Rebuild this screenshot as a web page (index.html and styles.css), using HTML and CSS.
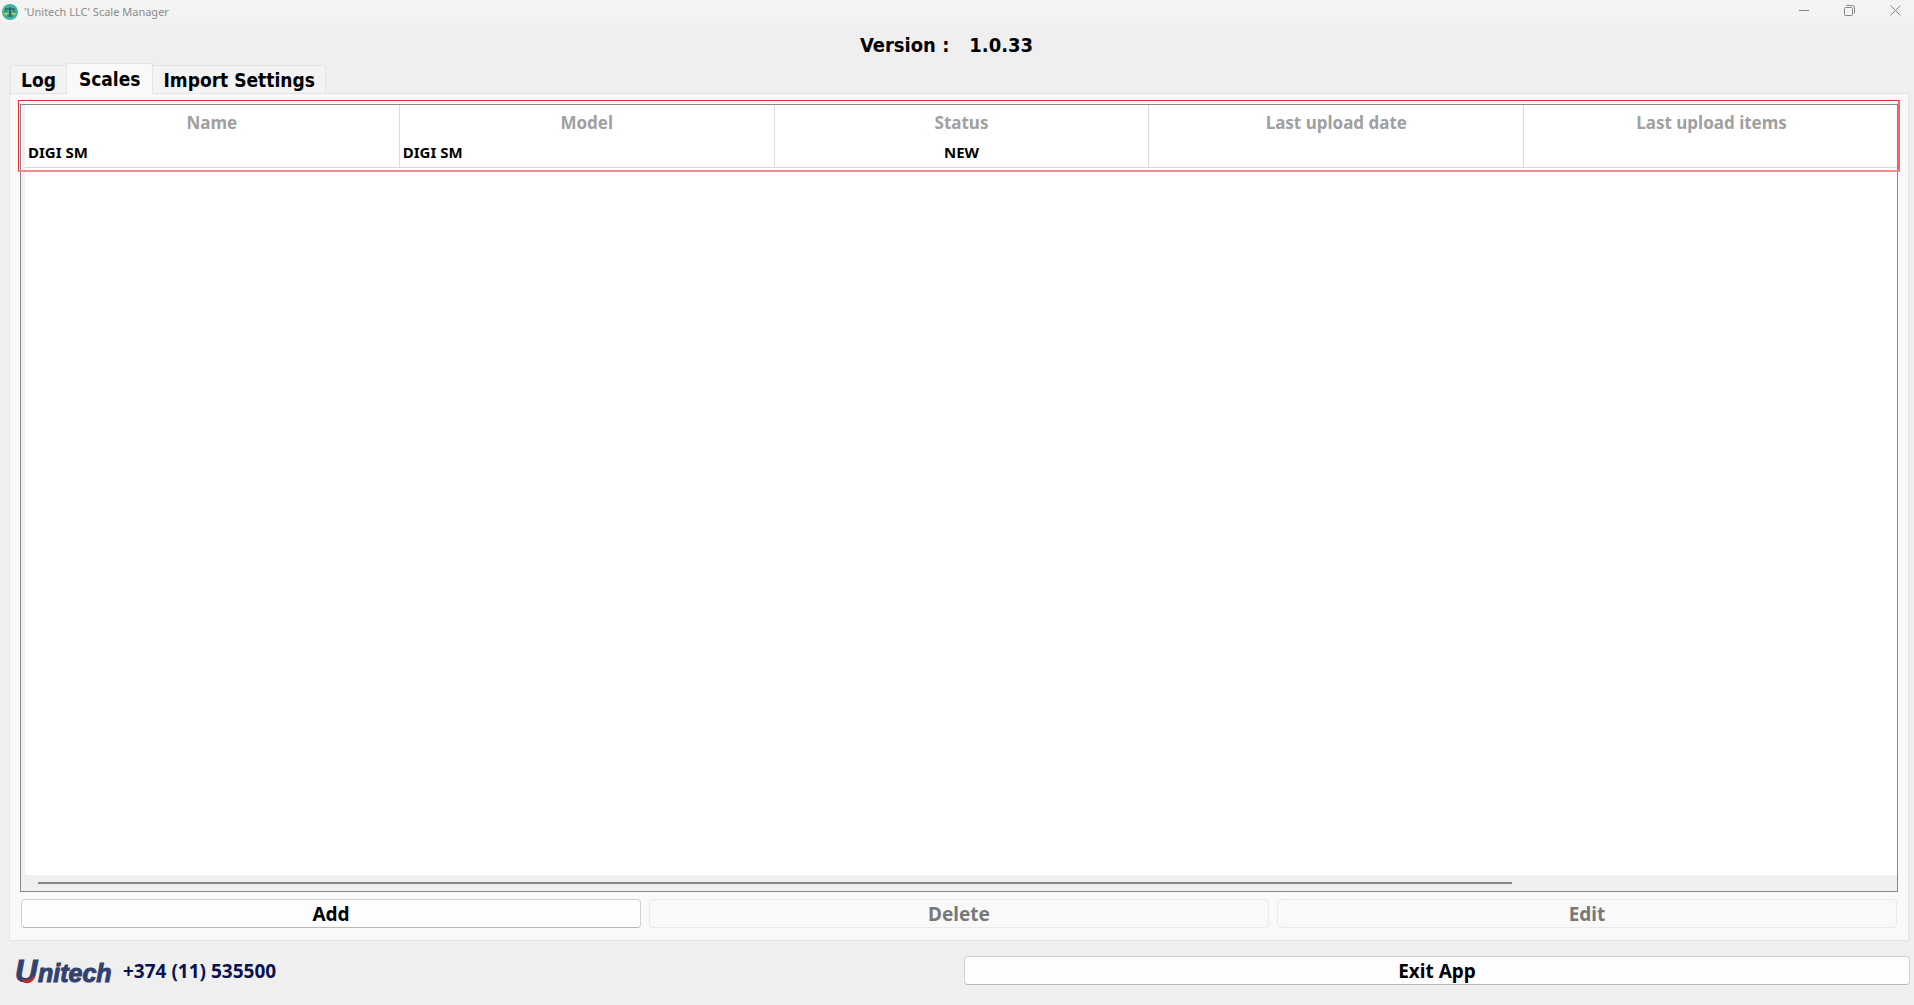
FILE: index.html
```html
<!DOCTYPE html>
<html lang="en">
<head>
<meta charset="utf-8">
<title>'Unitech LLC' Scale Manager</title>
<link rel="stylesheet" href="styles.css">
</head>
<body>
<header class="titlebar">
  <svg class="app-icon" width="16" height="16" viewBox="0 0 16 16" aria-hidden="true">
    <circle cx="8" cy="8" r="8" fill="#3fb59c"/>
    <path d="M3 5h10M8 3v9M5.500 12h5" stroke="#28475c" stroke-width="1.200" fill="none"/>
    <path d="M2.600 9 4 5.500 5.400 9M10.600 9 12 5.500 13.400 9" stroke="#28475c" stroke-width=".5" fill="none"/>
    <path d="M2 8.800h4a2 2 0 0 1-4 0zM10 8.800h4a2 2 0 0 1-4 0z" fill="#e8c444"/>
  </svg>
  <span class="title">'Unitech LLC' Scale Manager</span>
  <div class="window-controls">
    <button type="button" class="window-button" aria-label="Minimize"><svg width="11" height="11" viewBox="0 0 11 11"><path d="M0 5.500h10"/></svg></button>
    <button type="button" class="window-button" aria-label="Restore"><svg width="11" height="11" viewBox="0 0 11 11"><path d="M1.500 2.500h6a1 1 0 0 1 1 1v6a1 1 0 0 1-1 1h-6a1 1 0 0 1-1-1v-6a1 1 0 0 1 1-1zM2.500 .500h6a2 2 0 0 1 2 2v6"/></svg></button>
    <button type="button" class="window-button window-close" aria-label="Close"><svg width="11" height="11" viewBox="0 0 11 11"><path d="M.500 .500l10 10M10.500 .500l-10 10"/></svg></button>
  </div>
</header>
<main class="window">
  <h1 class="version"><span>Version :</span><span>1.0.33</span></h1>
  <div class="tabs" role="tablist">
    <button type="button" class="tab" role="tab" aria-selected="false">Log</button>
    <button type="button" class="tab tab-active" role="tab" aria-selected="true">Scales</button>
    <button type="button" class="tab" role="tab" aria-selected="false">Import Settings</button>
  </div>
  <section class="panel" role="tabpanel">
    <div class="grid">
      <div class="grid-body">
        <table class="scales">
          <thead>
            <tr><th>Name</th><th>Model</th><th>Status</th><th>Last upload date</th><th>Last upload items</th></tr>
          </thead>
          <tbody>
            <tr><td>DIGI SM</td><td>DIGI SM</td><td class="status">NEW</td><td></td><td></td></tr>
          </tbody>
        </table>
      </div>
      <div class="scrollbar"><div class="thumb"></div></div>
      <div class="highlight"></div>
    </div>
    <div class="actions">
      <button type="button" class="button">Add</button>
      <button type="button" class="button" disabled>Delete</button>
      <button type="button" class="button" disabled>Edit</button>
    </div>
  </section>
  <footer class="footer">
    <div class="contact">
      <svg class="logo" width="98" height="26" viewBox="0 0 98 26" role="img" aria-label="Unitech">
        <text class="logo-text logo-initial" x="-1" y="24">U</text>
        <text class="logo-text" x="22" y="24">nitech</text>
        <path d="M6 19.500C8.500 23 15 22.500 19.500 16.500 18.500 22.500 14.500 25.500 10.500 25.200 7.500 25 6 22.500 6 19.500z" fill="#b5302f"/>
        <path d="M40 9.500l3.500-3-.5 3z" fill="#b5302f"/>
      </svg>
      <span class="phone">+374 (11) 535500</span>
    </div>
    <button type="button" class="button">Exit App</button>
  </footer>
</main>
</body>
</html>
```
FILE: styles.css
```css
* {
  box-sizing: border-box;
}

body {
  margin: 0;
  min-height: 100vh;
  display: flex;
  flex-direction: column;
  background: #efefef;
  color: #000;
  font-family: "Noto Sans", sans-serif;
}

button {
  margin: 0;
  color: inherit;
  font-family: inherit;
}

.titlebar {
  display: flex;
  align-items: center;
  height: 23px;
  padding-left: 2px;
  background: #f3f3f3;
}

.title {
  margin-left: 6px;
  color: #8b8b8b;
  font-size: 11px;
  line-height: 23px;
}

.window-controls {
  display: flex;
  height: 20px;
  margin-left: auto;
  align-self: flex-start;
}

.window-button {
  display: flex;
  align-items: center;
  justify-content: center;
  width: 45px;
  padding: 0;
  border: 0;
  background: none;
}

.window-button svg {
  fill: none;
  stroke: #858585;
}

.window-close {
  width: 42px;
  padding-left: 4px;
}

.window {
  flex: 1;
  display: flex;
  flex-direction: column;
}

.version {
  display: flex;
  justify-content: center;
  gap: 20px;
  margin: 10px 0 6px;
  padding-right: 21px;
  font: bold 20px/24px "DejaVu Sans Condensed", sans-serif;
}

.tabs {
  display: flex;
  align-items: flex-end;
  position: relative;
  z-index: 1;
  margin-bottom: -1px;
  padding-left: 10px;
}

.tab {
  height: 29px;
  margin-right: -1px;
  padding: 1px 10px 0;
  border: 1px solid #e5e5e5;
  border-radius: 2px 2px 0 0;
  background: #f3f3f3;
  font: bold 19px/26px "DejaVu Sans Condensed", sans-serif;
}

.tab-active {
  height: 31px;
  padding: 0 12px 1px;
  border-bottom: 0;
  background: #f9f9f9;
}

.panel {
  flex: 1;
  display: flex;
  flex-direction: column;
  margin: 0 5px 0 9px;
  padding: 10px;
  border: 1px solid #e5e5e5;
  background: #f9f9f9;
}

.grid {
  flex: 1;
  display: flex;
  flex-direction: column;
  position: relative;
  border: 1px solid #828790;
  background: #fff;
}

.grid-body {
  flex: 1;
  overflow: hidden;
  border-left: 4px solid #efefef;
}

.scales {
  width: calc(100% + 2px);
  table-layout: fixed;
  border-collapse: separate;
  border-spacing: 0;
}

.scales th,
.scales td {
  padding: 0;
  border-right: 1px solid #dcdcdc;
}

.scales th:last-child,
.scales td:last-child {
  border-right: 0;
}

.scales th {
  height: 33px;
  padding-top: 3px;
  color: #a0a0a0;
  font-size: 17px;
  line-height: 30px;
}

.scales td {
  height: 30px;
  padding: 0 3px 1px;
  border-bottom: 1px solid #d8d8d8;
  font-size: 15px;
  font-weight: bold;
  line-height: 28px;
}

.scales .status {
  text-align: center;
}

.scrollbar {
  height: 16px;
  padding: 7px 17px;
  background: #efefef;
}

.thumb {
  width: 80%;
  height: 2px;
  background: #868686;
}

.highlight {
  position: absolute;
  top: -5px;
  left: -3px;
  right: -3px;
  height: 72px;
  border: 1px solid #e82c2c;
  border-right: 2px solid #ee6a68;
  border-bottom: 2px solid #f08a86;
  pointer-events: none;
}

.actions {
  display: flex;
  gap: 8px;
  margin: 7px 1px 2px;
}

.button {
  flex: 1;
  height: 29px;
  padding: 0;
  border: 1px solid #d0d0d0;
  border-bottom-color: #b9b9b9;
  border-radius: 4px;
  background: #fdfdfd;
  font-size: 19px;
  font-weight: bold;
  line-height: 26px;
}

.button:disabled {
  border-color: #e9e9e9;
  background: #f9f9f9;
  color: #787878;
}

.footer {
  display: grid;
  grid-template-columns: 1fr 1fr;
  gap: 8px;
  padding: 15px 4px 20px 10px;
}

.contact {
  display: flex;
  align-items: center;
  gap: 9px;
  padding-left: 6px;
}

.logo {
  overflow: visible;
}

.logo-text {
  fill: #33416f;
  stroke: #33416f;
  font: italic bold 25px "Liberation Sans", sans-serif;
}

.logo-initial {
  font-size: 31px;
}

.phone {
  color: #0a1250;
  font-size: 19px;
  font-weight: bold;
  line-height: 28px;
}
```
